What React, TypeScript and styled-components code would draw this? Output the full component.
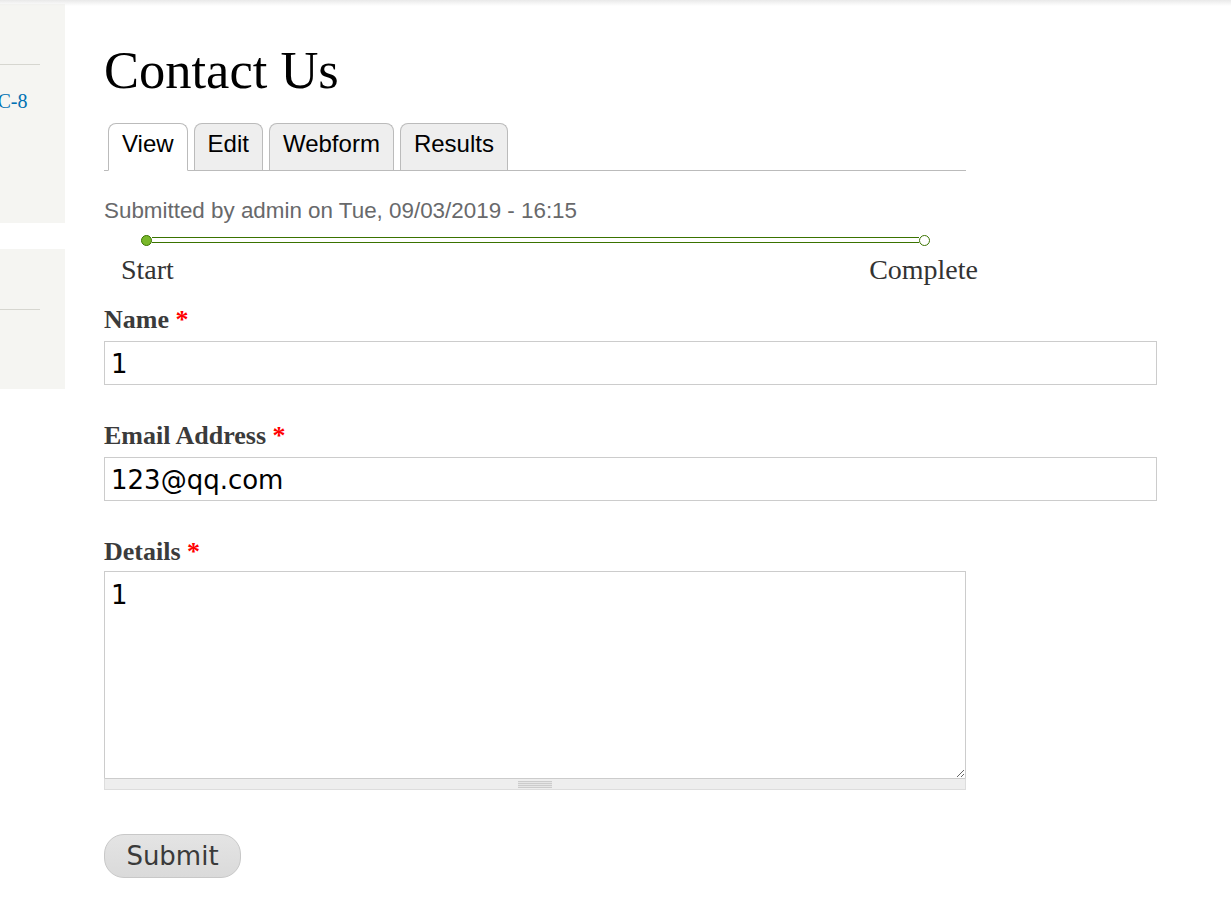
import styled, { createGlobalStyle } from "styled-components";

const GlobalStyle = createGlobalStyle`
  html, body {
    margin: 0;
    padding: 0;
    background: #fff;
  }
  body {
    font-family: "Liberation Serif", serif;
    color: #333;
  }
`;

const tabs = ["View", "Edit", "Webform", "Results"];

const App = () => {
  return (
    <>
      <GlobalStyle />
      <Page>
        <TopShadow />
        <Layout>
          <Sidebar>
            <Block $height={219}>
              <BlockRule />
              <BlockLink href="#">VC-8</BlockLink>
            </Block>
            <Block $height={140}>
              <BlockRule $top={60} />
            </Block>
          </Sidebar>

          <Main>
            <Title>Contact Us</Title>
            <Tabs>
              {tabs.map((t, i) => (
                <Tab key={t} $active={i === 0}>
                  {t}
                </Tab>
              ))}
            </Tabs>

            <Submitted>Submitted by admin on Tue, 09/03/2019 - 16:15</Submitted>

            <Progress>
              <Track>
                <DotStart />
                <Line />
                <DotEnd />
              </Track>
              <Steps>
                <span>Start</span>
                <span>Complete</span>
              </Steps>
            </Progress>

            <Field>
              <Label>
                Name <Req>*</Req>
              </Label>
              <TextInput defaultValue="1" />
            </Field>

            <Field>
              <Label>
                Email Address <Req>*</Req>
              </Label>
              <TextInput defaultValue="123@qq.com" />
            </Field>

            <Field>
              <Label $gap={4}>
                Details <Req>*</Req>
              </Label>
              <AreaWrap>
                <TextArea defaultValue="1" />
                <Grippie>
                  <GripLines />
                </Grippie>
              </AreaWrap>
            </Field>

            <SubmitButton type="button">Submit</SubmitButton>
          </Main>
        </Layout>
      </Page>
    </>
  );
};

export default App;

const Page = styled.div`
  position: relative;
  width: 1231px;
  height: 898px;
  overflow: hidden;
  background: #fff;
`;

const TopShadow = styled.div`
  position: absolute;
  left: 0;
  right: 0;
  top: 0;
  height: 6px;
  background: linear-gradient(#e9e9e9, rgba(255, 255, 255, 0));
  z-index: 2;
`;

const Layout = styled.div`
  display: flex;
  align-items: flex-start;
  padding-top: 4px;
`;

const Sidebar = styled.aside`
  width: 65px;
  flex: none;
  display: flex;
  flex-direction: column;
  gap: 26px;
`;

const Block = styled.div<{ $height: number }>`
  position: relative;
  height: ${(p) => p.$height}px;
  background: #f5f5f2;
  overflow: hidden;
`;

const BlockRule = styled.div<{ $top?: number }>`
  margin-top: ${(p) => p.$top ?? 60}px;
  width: 40px;
  height: 1px;
  background: #d6d6d0;
`;

const BlockLink = styled.a`
  display: block;
  margin-top: 25px;
  margin-left: -17px;
  font-family: "Liberation Serif", serif;
  font-size: 20px;
  color: #0071b3;
  text-decoration: none;
  white-space: nowrap;
`;

const Main = styled.main`
  margin-left: 39px;
  width: 1053px;
  padding-top: 36px;
`;

const Title = styled.h1`
  margin: 0;
  font-family: "Liberation Serif", serif;
  font-weight: normal;
  font-size: 52.5px;
  line-height: 60px;
  color: #000;
`;

const Tabs = styled.ul`
  display: flex;
  gap: 6px;
  list-style: none;
  margin: 23px 0 0;
  padding: 0 0 0 4px;
  width: 858px;
  border-bottom: 1px solid #bbb;
  height: 47px;
  align-items: flex-end;
`;

const Tab = styled.li<{ $active: boolean }>`
  box-sizing: border-box;
  padding: 5px 13px 0;
  margin-bottom: ${(p) => (p.$active ? "-1px" : "0")};
  height: ${(p) => (p.$active ? "48px" : "47px")};
  border: 1px solid #bbb;
  border-bottom: ${(p) => (p.$active ? "1px solid #fff" : "none")};
  border-radius: 8px 8px 0 0;
  background: ${(p) => (p.$active ? "#fff" : "#eee")};
  font-family: "Liberation Sans", Arial, sans-serif;
  font-size: 24px;
  line-height: 30px;
  color: #000;
`;

const Submitted = styled.div`
  margin-top: 27px;
  font-family: "Liberation Sans", Arial, sans-serif;
  font-size: 22.4px;
  line-height: 26px;
  color: #68696b;
`;

const Progress = styled.div`
  margin-top: 10px;
  width: 874px;
`;

const Track = styled.div`
  display: flex;
  align-items: center;
  margin-left: 37px;
  width: 789px;
  height: 12px;
`;

const DotStart = styled.span`
  flex: none;
  width: 11px;
  height: 11px;
  border-radius: 50%;
  background: #79b82a;
  border: 1px solid #3a7300;
  box-sizing: border-box;
`;

const DotEnd = styled(DotStart)`
  background: #fff;
`;

const Line = styled.span`
  flex: 1;
  height: 6px;
  box-sizing: border-box;
  border-top: 1px solid #3a7300;
  border-bottom: 1px solid #3a7300;
`;

const Steps = styled.div`
  display: flex;
  justify-content: space-between;
  padding-left: 17px;
  margin-top: 8px;
  font-family: "Liberation Serif", serif;
  font-size: 28px;
  line-height: 32px;
  color: #333;
`;

const Field = styled.div`
  margin-top: 19px;
  & + & {
    margin-top: 36px;
  }
`;

const Label = styled.label<{ $gap?: number }>`
  display: block;
  font-family: "Liberation Serif", serif;
  font-weight: bold;
  font-size: 26px;
  line-height: 30px;
  color: #3b3b3b;
  margin-bottom: ${(p) => p.$gap ?? 6}px;
`;

const Req = styled.span`
  color: #f00;
`;

const TextInput = styled.input`
  display: block;
  box-sizing: border-box;
  width: 1053px;
  height: 44px;
  padding: 2px 6px 0;
  border: 1px solid #ccc;
  border-radius: 0;
  font-family: "DejaVu Sans", sans-serif;
  font-size: 26px;
  color: #000;
  outline: none;
`;

const AreaWrap = styled.div`
  width: 862px;
`;

const TextArea = styled.textarea`
  display: block;
  box-sizing: border-box;
  width: 862px;
  height: 207px;
  margin: 0;
  padding: 8px 6px;
  border: 1px solid #ccc;
  border-bottom: none;
  border-radius: 0;
  resize: vertical;
  font-family: "DejaVu Sans", sans-serif;
  font-size: 26px;
  line-height: 30px;
  color: #000;
  outline: none;
`;

const Grippie = styled.div`
  display: flex;
  justify-content: center;
  align-items: center;
  box-sizing: border-box;
  height: 12px;
  background: #eee;
  border: 1px solid #ddd;
  border-top-color: #ccc;
`;

const GripLines = styled.span`
  width: 34px;
  height: 7px;
  background: repeating-linear-gradient(
    #ccc 0,
    #ccc 1px,
    #e6e6e6 1px,
    #e6e6e6 2px
  );
`;

const SubmitButton = styled.button`
  display: block;
  margin-top: 44px;
  width: 137px;
  height: 44px;
  border: 1px solid #c8c8c8;
  border-radius: 20px;
  background: linear-gradient(#e4e4e4, #dadada);
  font-family: "DejaVu Sans", sans-serif;
  font-size: 26px;
  color: #3a3a3a;
  padding: 0;
  cursor: pointer;
`;
